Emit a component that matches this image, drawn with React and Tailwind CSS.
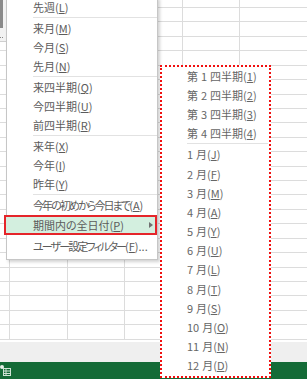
import React from "react";

const rows = Array.from({ length: 23 });
const cols = Array.from({ length: 5 });

const mainItems = [
  { label: "先週", key: "L" },
  "sep",
  { label: "来月", key: "M" },
  { label: "今月", key: "S" },
  { label: "先月", key: "N" },
  "sep",
  { label: "来四半期", key: "Q" },
  { label: "今四半期", key: "U" },
  { label: "前四半期", key: "R" },
  "sep",
  { label: "来年", key: "X" },
  { label: "今年", key: "I" },
  { label: "昨年", key: "Y" },
  "sep",
  { label: "今年の初めから今日まで", key: "A", tight: true },
];

const quarters = [
  { label: "第 1 四半期", key: "1" },
  { label: "第 2 四半期", key: "2" },
  { label: "第 3 四半期", key: "3" },
  { label: "第 4 四半期", key: "4" },
];

const months = [
  ["1 月", "J"],
  ["2 月", "F"],
  ["3 月", "M"],
  ["4 月", "A"],
  ["5 月", "Y"],
  ["6 月", "U"],
  ["7 月", "L"],
  ["8 月", "T"],
  ["9 月", "S"],
  ["10 月", "O"],
  ["11 月", "N"],
  ["12 月", "D"],
];

// spaces in the labels are drawn a little wider than the font's own
function Label({ label, k, tail, tight }) {
  const parts = label.split(" ");
  return (
    <span className="whitespace-nowrap">
      {parts.map((p, i) => (
        <React.Fragment key={i}>
          {i > 0 && <span className="inline-block w-[3px]" />}
          <span className={tight ? "tracking-[-1.9px]" : ""}>{p}</span>
        </React.Fragment>
      ))}
      (<span className="underline">{k}</span>){tail}
    </span>
  );
}

function GridRow({ h }) {
  return (
    <div className={`flex border-b border-[#dcdcdc] ${h}`}>
      <div className="w-[9px] shrink-0" />
      {cols.map((_, i) => (
        <div key={i} className="w-[57.6px] shrink-0 border-l border-[#dcdcdc]" />
      ))}
    </div>
  );
}

export default function App() {
  return (
    <div className="relative w-[307px] h-[379px] overflow-hidden bg-white font-['Noto_Sans_CJK_JP',sans-serif] text-[11px] [font-feature-settings:'palt']">
      {/* sheet */}
      <div className="flex flex-col h-full">
        <div className="h-[342px] overflow-hidden">
          <GridRow h="h-[8px]" />
          {rows.map((_, i) => (
            <GridRow key={i} h="h-[14.43px]" />
          ))}
        </div>
        <div className="h-[20px] bg-[#efefef]" />
        <div className="h-[17px] bg-[#146b37] flex items-center">
          <svg width="12" height="13" viewBox="0 0 12 13">
            <circle cx="2" cy="3" r="2" fill="#e8efe9" />
            <rect x="3.5" y="4.5" width="7" height="7" fill="none" stroke="#cfe3d5" />
            <path d="M3.5 7h7M3.5 9.5h7M6 4.5v7" stroke="#cfe3d5" />
          </svg>
        </div>
      </div>

      {/* dialog edge on the left */}
      <div className="absolute left-0 top-0 w-[7px] h-[42px] bg-[#f2f2f2] border-b border-[#cfcfcf]">
        <div className="w-[3px] h-[28px] bg-[#8a8a8a]" />
        <div className="mt-[9px] flex gap-px">
          <div className="w-px h-px bg-[#888]" />
          <div className="w-px h-px bg-[#888]" />
        </div>
      </div>

      {/* filter menu */}
      <div className="absolute left-[6px] top-[-3px] w-[152px] bg-white border border-[#c6c6c6] shadow-[2px_2px_3px_rgba(0,0,0,0.18)] text-[#5b5b5b]">
        {mainItems.map((it, i) =>
          it === "sep" ? (
            <div key={i} className="h-[2px] pl-[26px]">
              <div className="h-px bg-[#e2e2e2]" />
            </div>
          ) : (
            <div key={i} className="h-[19px] flex items-center pl-[26px]">
              <Label label={it.label} k={it.key} tight={it.tight} />
            </div>
          )
        )}
        <div className="relative h-[20px] flex items-center pl-[26px]">
          <div className="absolute -left-[3px] right-0 top-0 bottom-0 bg-[#d3efdf] border-2 border-[#e5252a]" />
          <span className="relative">
            <Label label="期間内の全日付" k="P" />
          </span>
          <div className="absolute right-[4px] top-[7px] w-0 h-0 border-y-[3px] border-y-transparent border-l-[4px] border-l-[#707070]" />
        </div>
        <div className="h-[24px] flex items-center pl-[26px] pb-[2px]">
          <Label label="ユーザー設定フィルター" k="F" tail="..." tight />
        </div>
      </div>

      {/* date submenu */}
      <div className="absolute left-[160px] top-[65px] w-[111px] h-[313px] bg-white border-2 border-dotted border-[#f01010] text-[#666]">
        {quarters.map((q) => (
          <div key={q.key} className="h-[19px] flex items-center pl-[25px]">
            <Label label={q.label} k={q.key} />
          </div>
        ))}
        <div className="h-[2px] pl-[25px] pr-px">
          <div className="h-px bg-[#e2e2e2]" />
        </div>
        {months.map(([m, k]) => (
          <div key={m} className="h-[19.2px] flex items-center pl-[25px]">
            <Label label={m} k={k} />
          </div>
        ))}
      </div>
    </div>
  );
}
